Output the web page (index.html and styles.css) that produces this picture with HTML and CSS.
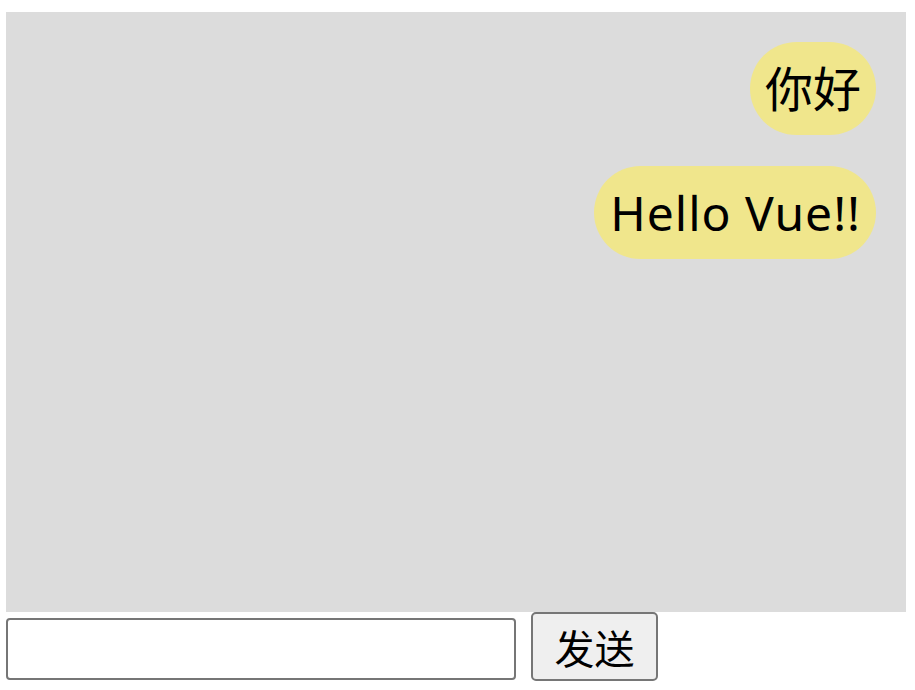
FILE: index.html
```html
<!DOCTYPE html>
<html lang="zh">
<head>
<meta charset="utf-8">
<title>Chat</title>
<link rel="stylesheet" href="styles.css">
</head>
<body>
<div class="app">
  <div class="chat">
    <div class="bubble">你好</div>
    <div class="bubble latin">Hello Vue!!</div>
  </div>
  <div class="composer">
    <input class="field" type="text">
    <button class="send">发送</button>
  </div>
</div>
</body>
</html>
```
FILE: styles.css
```css
html, body {
  margin: 0;
  padding: 0;
  background: #ffffff;
}
.app {
  padding: 12px 0 0 6px;
  font-family: "Noto Sans", "Noto Sans CJK SC", sans-serif;
}
.chat {
  box-sizing: border-box;
  width: 900px;
  height: 600px;
  background: #dcdcdc;
  padding: 30px 30px;
  display: flex;
  flex-direction: column;
  align-items: flex-end;
  gap: 31px;
}
.bubble {
  background: #f0e68c;
  font-size: 48px;
  line-height: 63px;
  padding: 15px 15px;
  border-radius: 47px;
  color: #000;
  white-space: nowrap;
}
.latin {
  letter-spacing: 1px;
  padding-left: 16px;
}
.composer {
  display: flex;
  align-items: flex-start;
}
.field {
  box-sizing: border-box;
  width: 510px;
  height: 62px;
  margin: 6px 0 0 0;
  border: 2px solid #767676;
  border-radius: 4px;
  background: #fff;
  padding: 0 4px;
  font-size: 40px;
  font-family: inherit;
}
.send {
  box-sizing: border-box;
  width: 127px;
  height: 69px;
  margin: 0 0 0 15px;
  border: 2px solid #767676;
  border-radius: 5px;
  background: #efefef;
  font-family: "Noto Sans CJK SC", sans-serif;
  font-size: 40px;
  line-height: 1;
  padding: 0;
  color: #000;
}
```
